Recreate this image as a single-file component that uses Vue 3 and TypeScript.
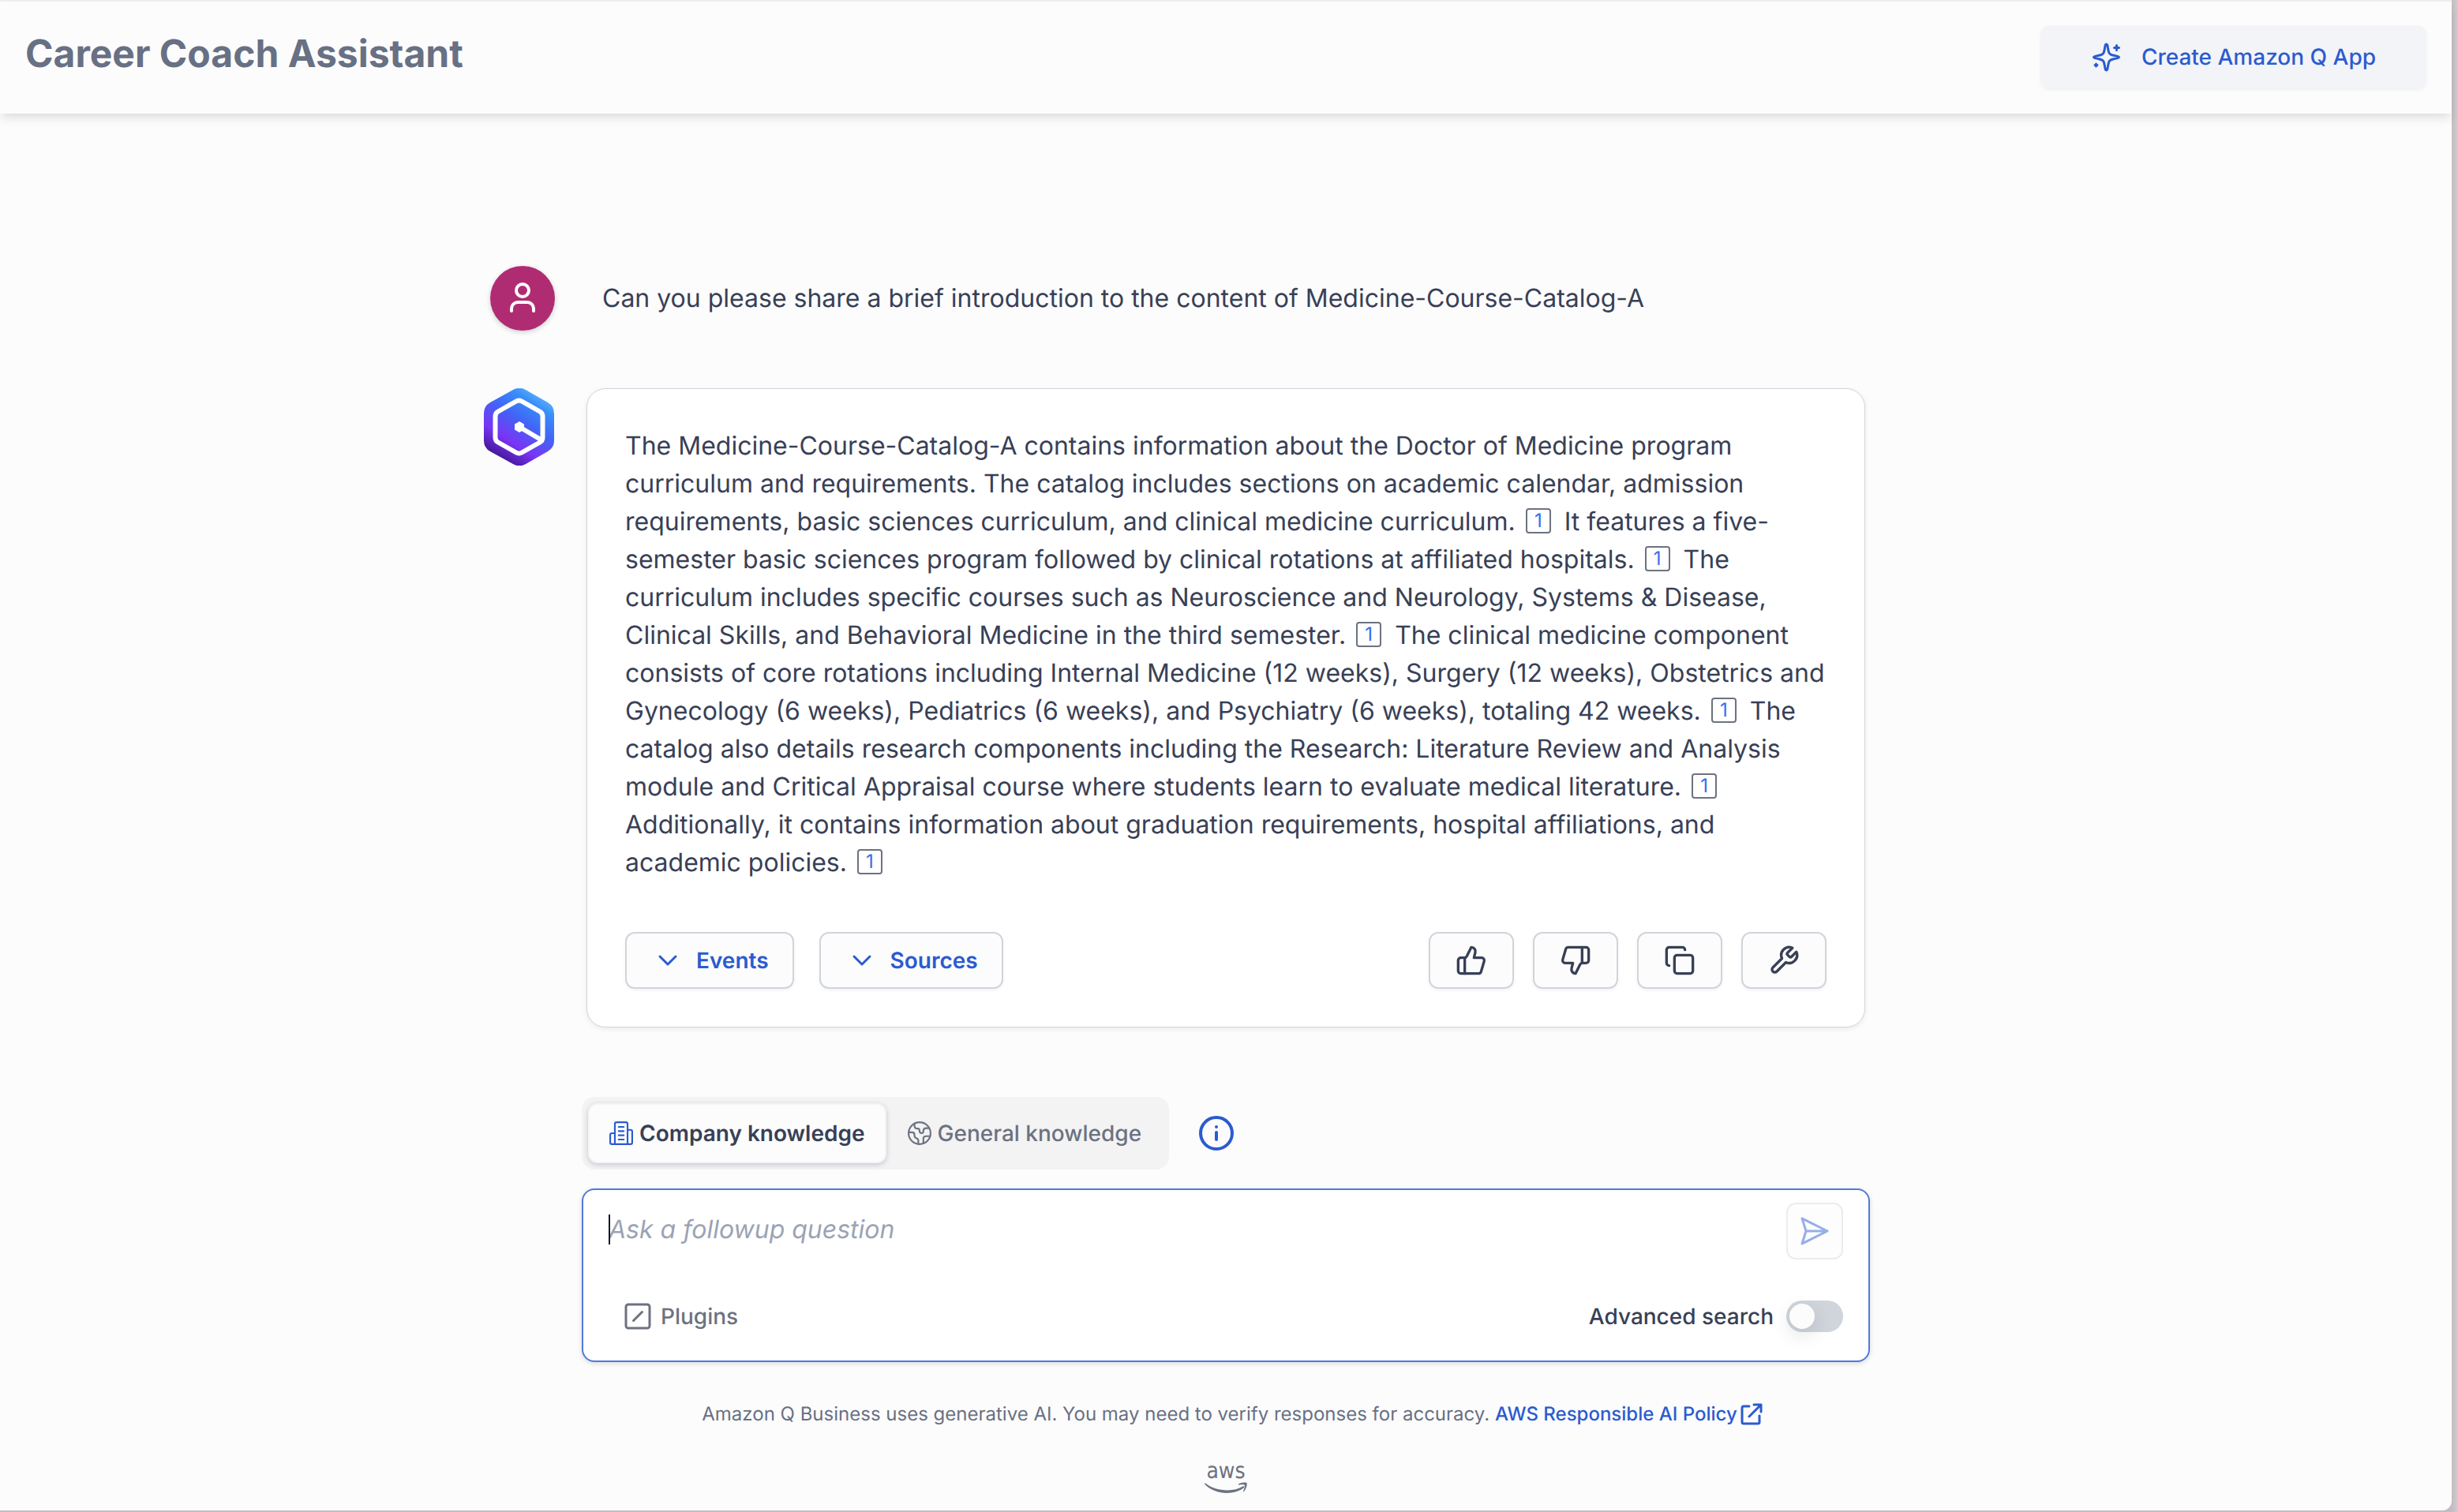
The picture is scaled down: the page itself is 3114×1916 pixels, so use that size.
<script setup lang="ts">
import { computed, onMounted, ref } from 'vue'

type Mode = 'company' | 'general'

const question = 'Can you please share a brief introduction to the content of Medicine-Course-Catalog-A'

// Every passage of the answer is followed by its citation marker.
const answer: string[] = [
  'The Medicine-Course-Catalog-A contains information about the Doctor of Medicine program curriculum and requirements. The catalog includes sections on academic calendar, admission requirements, basic sciences curriculum, and clinical medicine curriculum.',
  'It features a five-semester basic sciences program followed by clinical rotations at affiliated hospitals.',
  'The curriculum includes specific courses such as Neuroscience and Neurology, Systems & Disease, Clinical Skills, and Behavioral Medicine in the third semester.',
  'The clinical medicine component consists of core rotations including Internal Medicine (12 weeks), Surgery (12 weeks), Obstetrics and Gynecology (6 weeks), Pediatrics (6 weeks), and Psychiatry (6 weeks), totaling 42 weeks.',
  'The catalog also details research components including the Research: Literature Review and Analysis module and Critical Appraisal course where students learn to evaluate medical literature.',
  'Additionally, it contains information about graduation requirements, hospital affiliations, and academic policies.',
]

const disclosures = ['Events', 'Sources']

const actions: { label: string; paths: string[] }[] = [
  {
    label: 'Helpful',
    paths: [
      'M7 10v12',
      'M15 5.88 14 10h5.83a2 2 0 0 1 1.92 2.56l-2.33 8A2 2 0 0 1 17.5 22H4a2 2 0 0 1-2-2v-8a2 2 0 0 1 2-2h2.76a2 2 0 0 0 1.79-1.11L12 2a3.13 3.13 0 0 1 3 3.88Z',
    ],
  },
  {
    label: 'Not helpful',
    paths: [
      'M17 14V2',
      'M9 18.12 10 14H4.17a2 2 0 0 1-1.92-2.56l2.33-8A2 2 0 0 1 6.5 2H20a2 2 0 0 1 2 2v8a2 2 0 0 1-2 2h-2.76a2 2 0 0 0-1.79 1.11L12 22a3.13 3.13 0 0 1-3-3.88Z',
    ],
  },
  {
    label: 'Copy',
    paths: [
      'M10 8h10a2 2 0 0 1 2 2v10a2 2 0 0 1-2 2H10a2 2 0 0 1-2-2V10a2 2 0 0 1 2-2Z',
      'M4 16a2 2 0 0 1-2-2V4a2 2 0 0 1 2-2h10a2 2 0 0 1 2 2',
    ],
  },
  {
    label: 'Tools',
    paths: [
      'M14.7 6.3a1 1 0 0 0 0 1.4l1.6 1.6a1 1 0 0 0 1.4 0l3.77-3.77a6 6 0 0 1-7.94 7.94l-6.91 6.91a2.12 2.12 0 0 1-3-3l6.91-6.91a6 6 0 0 1 7.94-7.94l-3.76 3.76z',
    ],
  },
]

const mode = ref<Mode>('company')
const draft = ref('')
const advanced = ref(false)
const field = ref<HTMLTextAreaElement | null>(null)
const canSend = computed(() => draft.value.trim().length > 0)

onMounted(() => field.value?.focus())
</script>

<template>
  <div class="backdrop">
    <div class="window">
      <header class="topbar">
        <h1>Career Coach Assistant</h1>
        <button class="create" type="button">
          <svg viewBox="0 0 48 48" aria-hidden="true">
            <path d="M23.500 8c1.200 0 1.400 1.500 2 5 1 6.500 1.500 8 7.500 9.300 4.500 1 6.500 1 6.500 2.200s-2 1.200-6.500 2.200c-6 1.300-6.500 2.800-7.500 9.300-.6 3.500-.8 5-2 5s-1.400-1.500-2-5c-1-6.500-1.500-8-7.500-9.300-4.500-1-6.500-1-6.500-2.200s2-1.200 6.500-2.200c6-1.300 6.500-2.800 7.500-9.300.6-3.500.8-5 2-5Z" />
            <path d="M36.500 9.500v6M33.500 12.500h6M10.500 33v3M9 34.500h3" />
          </svg>
          <span>Create Amazon Q App</span>
        </button>
      </header>

      <main>
        <section class="row question">
          <span class="avatar">
            <svg viewBox="0 0 24 24" aria-hidden="true">
              <circle cx="12" cy="7" r="4" />
              <path d="M5 20v-1.500a4 4 0 0 1 4-4h6a4 4 0 0 1 4 4V20" />
            </svg>
          </span>
          <p>{{ question }}</p>
        </section>

        <section class="row">
          <svg class="logo" viewBox="0 0 90 98" role="img" aria-label="Amazon Q">
            <defs>
              <linearGradient id="hex" x1="76" y1="10" x2="22" y2="92" gradientUnits="userSpaceOnUse">
                <stop offset="0" stop-color="#5ab2fa" />
                <stop offset="0.16" stop-color="#398df9" />
                <stop offset="0.42" stop-color="#4164f5" />
                <stop offset="0.72" stop-color="#7a35f5" />
                <stop offset="1" stop-color="#401592" />
              </linearGradient>
            </defs>
            <path
              fill="url(#hex)"
              d="M37 2a16 16 0 0 1 16 0L81 18a16 16 0 0 1 8 14V66a16 16 0 0 1-8 14L53 96a16 16 0 0 1-16 0L8 80A16 16 0 0 1 0 66V32A16 16 0 0 1 8 18Z"
            />
            <path
              class="ring"
              d="M41 16.500a7 7 0 0 1 7 0L71 29.500a7 7 0 0 1 3.500 6V62.500a7 7 0 0 1-3.500 6L48 81.500a7 7 0 0 1-7 0L18 68.500a7 7 0 0 1-3.500-6V35.500a7 7 0 0 1 3.500-6ZM45 49 72 65"
            />
            <path fill="#fff" d="m45 42 6 3.500v7L45 56l-6-3.500v-7Z" />
          </svg>

          <article class="card">
            <p>
              <template v-for="(part, i) in answer" :key="i">{{ part }}&nbsp;<button class="cite" type="button" aria-label="Source 1">1</button>{{ ' ' }}</template>
            </p>
            <footer class="tools">
              <div class="group wide">
                <button v-for="name in disclosures" :key="name" class="btn disclose" type="button">
                  <svg viewBox="0 0 32 32" aria-hidden="true"><path d="m6 11 10 10 10-10" /></svg>
                  <span>{{ name }}</span>
                </button>
              </div>
              <div class="group">
                <button v-for="a in actions" :key="a.label" class="btn action" type="button" :aria-label="a.label">
                  <svg viewBox="0 0 24 24" aria-hidden="true">
                    <path v-for="d in a.paths" :key="d" :d="d" />
                  </svg>
                </button>
              </div>
            </footer>
          </article>
        </section>

        <section class="composer">
          <div class="modes">
            <div class="tabs">
              <button class="tab" :class="{ on: mode === 'company' }" type="button" @click="mode = 'company'">
                <svg viewBox="0 0 28 28" aria-hidden="true">
                  <path d="M6.500 27V3a2 2 0 0 1 2-2h11a2 2 0 0 1 2 2V27M6.500 14H3a2 2 0 0 0-2 2V25a2 2 0 0 0 2 2H25a2 2 0 0 0 2-2V12a2 2 0 0 0-2-2H21.500M11 6.500h6M11 11.500h6M11 16.500h6M11 21.500h6" />
                </svg>
                <span>Company knowledge</span>
              </button>
              <button class="tab" :class="{ on: mode === 'general' }" type="button" @click="mode = 'general'">
                <svg viewBox="0 0 28 28" aria-hidden="true">
                  <circle cx="14" cy="14" r="13" />
                  <path d="M8 3v2.500C8 8 10 8.500 12 8.500s2 1.500 2 3c0 2 1 2.500 2.500 2.500s2-1 2-2.500c0-2.500 1-3.500 3-3.500h3.500M1.500 13H5c2 0 3 1 3 3v1c0 2 1 2.500 2.500 3s2 1 2 2.500V27M26.500 17.500H22c-2 0-3.500 1-3.500 3v5.500" />
                </svg>
                <span>General knowledge</span>
              </button>
            </div>
            <button class="info" type="button" aria-label="About knowledge modes">
              <svg viewBox="0 0 44 44" aria-hidden="true">
                <circle cx="22" cy="22" r="20" />
                <path d="M22 14v.1M22 21v9" />
              </svg>
            </button>
          </div>

          <form class="prompt" @submit.prevent>
            <div class="line">
              <div class="field" :class="{ empty: !draft }">
                <textarea ref="field" v-model="draft" rows="1" placeholder="Ask a followup question" aria-label="Ask a followup question"></textarea>
              </div>
              <button class="send" type="submit" :disabled="!canSend" aria-label="Send">
                <svg viewBox="0 0 40 40" aria-hidden="true">
                  <path d="M4 4 36 20 4 36 9 20ZM9 20H36" />
                </svg>
              </button>
            </div>
            <div class="line">
              <button class="plugins" type="button">
                <svg viewBox="0 0 34 34" aria-hidden="true">
                  <rect x="2" y="2" width="30" height="30" rx="3" />
                  <path d="M11.500 22.500 22.500 11.500" />
                </svg>
                <span>Plugins</span>
              </button>
              <label class="advanced">
                <span>Advanced search</span>
                <input v-model="advanced" type="checkbox" role="switch" />
              </label>
            </div>
          </form>
        </section>

        <p class="legal">
          Amazon Q Business uses generative AI. You may need to verify responses for accuracy.
          <a href="#policy">AWS Responsible AI Policy<svg viewBox="0 0 28 28" aria-hidden="true"><path d="M11 4H4a2 2 0 0 0-2 2V24a2 2 0 0 0 2 2H22a2 2 0 0 0 2-2V16M17 2h9v9M26 2 11 17" /></svg></a>
        </p>

        <div class="aws">
          <span>aws</span>
          <svg viewBox="0 0 54 20" aria-hidden="true">
            <path d="M1 1.500C14 12 37 13 48.500 5.500c1.500-.8 2.500.8 1 2C38 16.500 14 17 .5 3-.2 2 .3 1 1 1.500ZM43 2.500C46 .2 52.500-.2 53.500 1.200c.8 1.500-.5 8-3.500 10.800-.7.6-1.200.2-.9-.5 1-2.500 2.300-6.500 1.700-7.500-.8-1-4.800-.6-7.200-.3-.8.100-1-.6-.6-1.200Z" />
          </svg>
        </div>
      </main>
    </div>
  </div>
</template>

<style>
body {
  margin: 0;
  background: #d5cace;
}
</style>

<style scoped>
.backdrop {
  box-sizing: border-box;
  min-height: 100vh;
  padding: 0 8px 2px 0;
  background: linear-gradient(to left, #d5cace, #c3bcc3 8px);
  font-family: Inter, 'Liberation Sans', sans-serif;
  text-rendering: geometricPrecision;
  color: #384056;
  display: flex;
}

.window {
  flex: 1;
  min-width: 0;
  background: #fcfcfc;
  border-top: 2px solid #eeeeee;
  border-radius: 0 0 12px 0;
}

button,
textarea {
  font: inherit;
  text-rendering: inherit;
}

button {
  cursor: pointer;
}

h1,
p {
  margin: 0;
}

svg {
  fill: none;
  stroke: currentColor;
  stroke-width: 2;
  stroke-linecap: round;
  stroke-linejoin: round;
  flex: none;
}

.topbar {
  box-sizing: border-box;
  height: 142px;
  display: flex;
  align-items: flex-start;
  justify-content: space-between;
  padding: 30px 32px;
  box-shadow: 0 8px 12px -2px rgba(16, 24, 40, 0.1), 0 4px 8px -4px rgba(16, 24, 40, 0.06);
}

h1 {
  font-size: 48px;
  line-height: 72px;
  font-weight: 700;
  color: #687084;
}

.create {
  display: flex;
  align-items: center;
  gap: 20px;
  height: 80px;
  padding: 0 64px 0 60px;
  border: 0;
  border-radius: 12px;
  background: #f3f4f8;
  color: #2b5bd0;
  font-size: 28px;
  font-weight: 500;
  box-shadow: 0 2px 4px rgba(16, 24, 40, 0.05);
}

.create svg {
  width: 48px;
  height: 48px;
  stroke-width: 3;
}

main {
  display: flex;
  flex-direction: column;
  padding-top: 193px;
}

.row {
  display: grid;
  grid-template-columns: 1fr minmax(0, 1620px) 1fr;
  column-gap: 40px;
  align-items: start;
  font-size: 32px;
  line-height: 48px;
}

.question {
  align-items: center;
  margin-bottom: 73px;
}

.question p {
  padding-left: 20px;
}

.avatar {
  justify-self: end;
  display: grid;
  place-items: center;
  width: 82px;
  height: 82px;
  border-radius: 50%;
  background: #b02c72;
  color: #fff;
  box-shadow: 0 2px 6px rgba(16, 24, 40, 0.2);
}

.avatar svg {
  width: 48px;
  height: 48px;
}

.logo {
  justify-self: end;
  width: 90px;
  height: 98px;
  stroke: none;
}

.logo .ring {
  stroke: #fff;
  stroke-width: 6;
}

.card {
  padding: 48px;
  background: #fff;
  border: 1px solid #d0d4dc;
  border-radius: 24px;
  box-shadow: 0 2px 6px rgba(16, 24, 40, 0.08);
}

.cite {
  box-sizing: border-box;
  width: 32px;
  height: 32px;
  margin: 0 8px 0 4px;
  padding: 0;
  border: 2px solid #6c7280;
  border-radius: 4px;
  background: transparent;
  color: #356fee;
  font-size: 24px;
  line-height: 28px;
  vertical-align: 4px;
}

.tools,
.group,
.modes,
.line,
.tabs {
  display: flex;
  align-items: center;
}

.tools {
  justify-content: space-between;
  margin-top: 64px;
}

.group {
  gap: 24px;
}

.wide {
  gap: 32px;
}

.btn {
  box-sizing: border-box;
  display: flex;
  align-items: center;
  justify-content: center;
  height: 72px;
  border: 2px solid #d0d5dc;
  border-radius: 12px;
  background: #fcfcfc;
  box-shadow: 0 2px 4px rgba(16, 24, 40, 0.05);
}

.disclose {
  gap: 20px;
  padding: 0 30px 0 36px;
  color: #2b5bd0;
  font-size: 28px;
  font-weight: 600;
}

.disclose svg {
  width: 32px;
  height: 32px;
  stroke-width: 3;
}

.action {
  width: 108px;
  color: #384056;
}

.action svg {
  width: 40px;
  height: 40px;
}

.composer {
  box-sizing: border-box;
  width: 100%;
  max-width: 1632px;
  margin: 88px auto 0;
}

.modes {
  gap: 38px;
}

.tabs {
  padding: 8px;
  border-radius: 16px;
  background: #f3f3f4;
}

.tab {
  box-sizing: border-box;
  display: flex;
  align-items: center;
  gap: 8px;
  height: 76px;
  padding: 0 25px;
  border: 2px solid transparent;
  border-radius: 12px;
  background: transparent;
  color: #6c7280;
  font-size: 28px;
  font-weight: 500;
}

.tab svg {
  width: 30px;
  height: 30px;
}

.tab.on {
  border-color: #f3f4f8;
  background: #fcfcfc;
  color: #384056;
  font-weight: 600;
  box-shadow: 0 2px 6px rgba(16, 24, 40, 0.2);
}

.tab.on svg {
  color: #2b5bd0;
}

.info {
  display: flex;
  padding: 0;
  border: 0;
  background: none;
  color: #2b5bd0;
}

.info svg {
  width: 44px;
  height: 44px;
  stroke-width: 4;
}

.prompt {
  box-sizing: border-box;
  height: 220px;
  margin-top: 24px;
  padding: 16px 32px;
  display: flex;
  flex-direction: column;
  gap: 44px;
  border: 2px solid #4f7bd8;
  border-radius: 16px;
  background: #fff;
  box-shadow: 0 2px 6px rgba(16, 24, 40, 0.14);
}

.line {
  justify-content: space-between;
}

.field {
  position: relative;
  flex: 1;
  min-width: 0;
  display: flex;
  margin-bottom: 4px;
}

/* steady insertion mark shown ahead of the placeholder */
.field.empty::before {
  content: '';
  position: absolute;
  left: 0;
  top: 5px;
  width: 2px;
  height: 38px;
  background: #101828;
}

textarea {
  flex: 1;
  min-width: 0;
  height: 48px;
  margin: 0;
  padding: 0;
  border: 0;
  outline: 0;
  resize: none;
  overflow: hidden;
  background: transparent;
  color: #384056;
  font-size: 32px;
  line-height: 48px;
}

.empty textarea {
  caret-color: transparent;
}

textarea::placeholder {
  color: #9ba3b4;
  font-style: italic;
}

.send {
  box-sizing: border-box;
  display: grid;
  place-items: center;
  width: 72px;
  height: 72px;
  padding: 0;
  border: 2px solid #ebecf0;
  border-radius: 12px;
  background: #fdfdfd;
  color: #96aee8;
}

.send svg {
  width: 40px;
  height: 40px;
  stroke-width: 3;
}

.plugins,
.advanced {
  display: flex;
  align-items: center;
  font-size: 28px;
  line-height: 56px;
  font-weight: 500;
}

.plugins {
  gap: 12px;
  padding: 0 20px;
  border: 0;
  background: none;
  color: #6c7280;
}

.plugins svg {
  width: 34px;
  height: 34px;
  stroke-width: 3;
}

.advanced {
  gap: 16px;
}

.advanced input {
  appearance: none;
  width: 72px;
  height: 40px;
  margin: 0;
  padding: 4px;
  box-sizing: border-box;
  border-radius: 20px;
  background: #d0d5dc;
  cursor: pointer;
}

.advanced input::before {
  content: '';
  display: block;
  width: 32px;
  height: 32px;
  border-radius: 50%;
  background: #fcfcfc;
  box-shadow: 0 8px 24px rgba(16, 24, 40, 0.12);
}

.advanced input:checked {
  background: #2b5bd0;
}

.advanced input:checked::before {
  margin-left: 32px;
}

.legal {
  margin-top: 48px;
  padding-left: 16px;
  text-align: center;
  font-size: 24px;
  line-height: 36px;
  color: #687084;
}

.legal a {
  color: #2b5bd0;
  font-weight: 500;
  text-decoration: none;
}

.legal svg {
  width: 28px;
  height: 28px;
  margin-left: 4px;
  stroke-width: 3;
  vertical-align: -6px;
}

.aws {
  display: flex;
  flex-direction: column;
  align-items: center;
  margin-top: 40px;
  color: #6c7280;
  font-family: 'DejaVu Sans Condensed', 'DejaVu Sans', sans-serif;
  font-size: 28px;
  line-height: 28px;
}

.aws svg {
  width: 54px;
  height: 20px;
  fill: currentColor;
  stroke: none;
}
</style>
